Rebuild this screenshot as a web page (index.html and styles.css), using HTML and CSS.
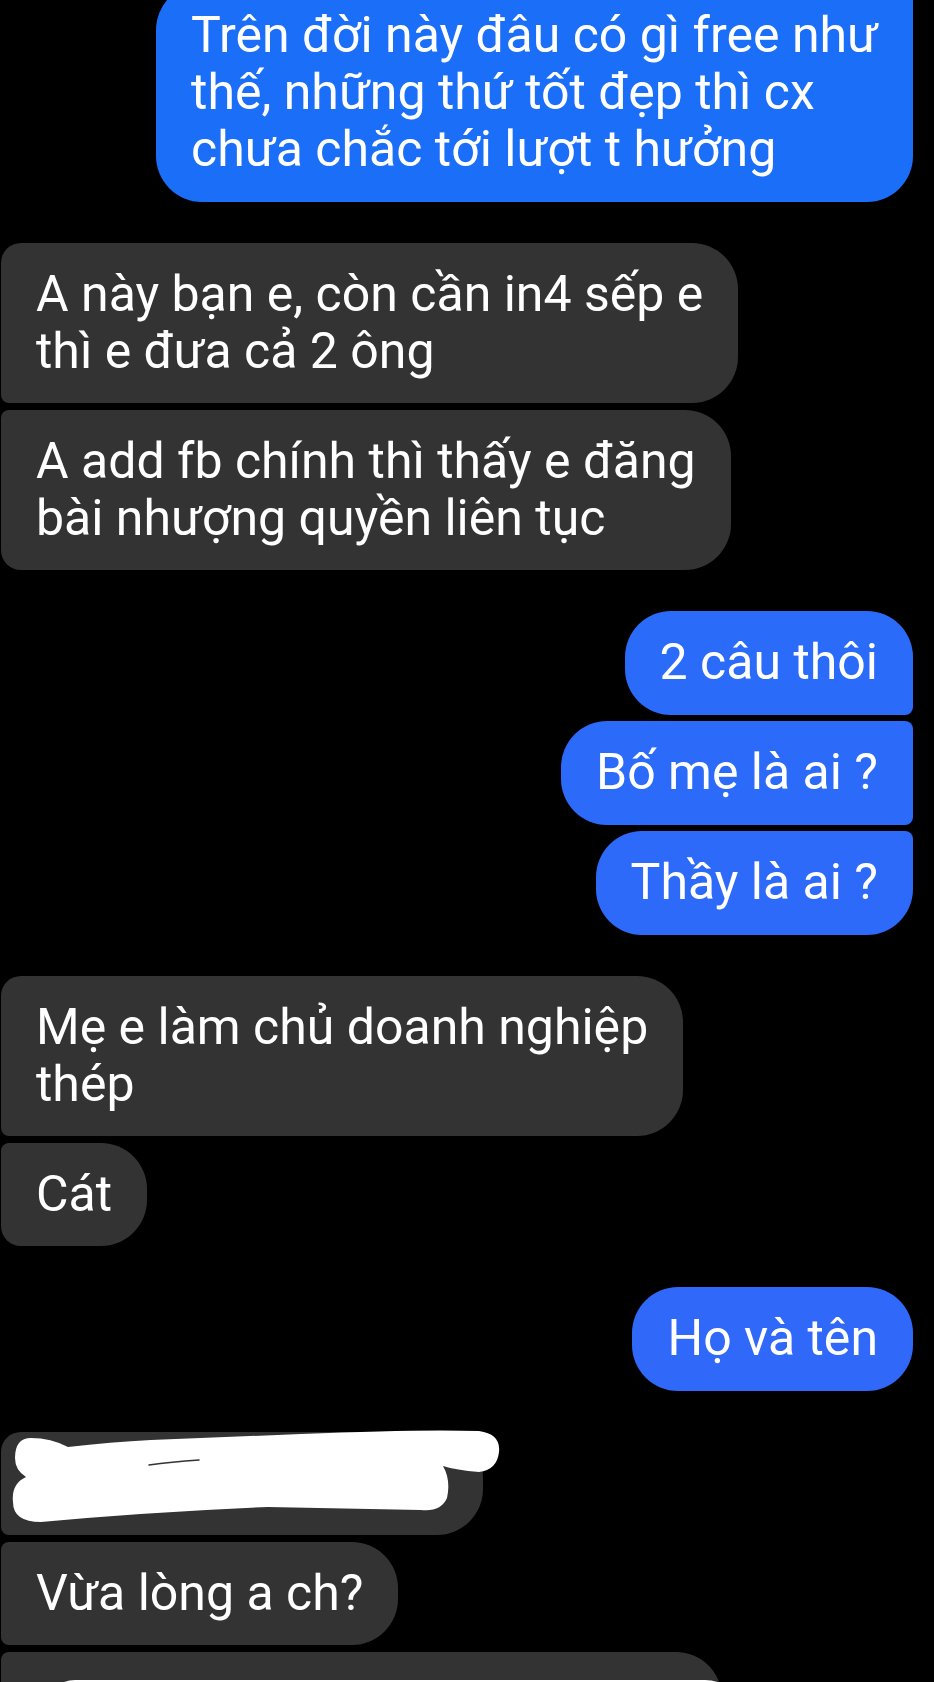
FILE: index.html
```html
<!DOCTYPE html>
<html lang="vi">
<head>
<meta charset="utf-8">
<title>Chat</title>
<link rel="stylesheet" href="styles.css">
</head>
<body>
<div class="chat">
  <div class="group sent">
    <div class="msg out out-last tone-1">Trên đời này đâu có gì free như<br>thế, những thứ tốt đẹp thì cx<br>chưa chắc tới lượt t hưởng</div>
  </div>

  <div class="group recv">
    <div class="msg in in-first">A này bạn e, còn cần in4 sếp e<br>thì e đưa cả 2 ông</div>
    <div class="msg in in-last">A add fb chính thì thấy e đăng<br>bài nhượng quyền liên tục</div>
  </div>

  <div class="group sent">
    <div class="msg out out-first tone-2">2 câu thôi</div>
    <div class="msg out out-mid tone-3">Bố mẹ là ai ?</div>
    <div class="msg out out-last tone-4">Thầy là ai ?</div>
  </div>

  <div class="group recv">
    <div class="msg in in-first">Mẹ e làm chủ doanh nghiệp<br>thép</div>
    <div class="msg in in-last">Cát</div>
  </div>

  <div class="group sent">
    <div class="msg out out-single tone-5">Họ và tên</div>
  </div>

  <div class="group recv">
    <div class="msg in in-first redacted-a">&nbsp;
      <svg class="scribble scribble-a" width="510" height="100" viewBox="0 -6 510 100" aria-hidden="true">
        <path d="M30 6 Q50 6 67 15 Q110 10 150 8 L300 2 Q420 -3 478 -1 Q500 2 498 20 Q496 38 478 40 Q455 38 442 34 Q450 48 446 66 Q440 80 420 78 L267 75 Q150 80 40 90 Q12 90 12 70 Q10 52 25 45 Q14 38 14 26 Q14 6 30 6 Z" fill="#ffffff"/>
        <path d="M148 33 Q170 30 198 28" stroke="#333333" stroke-width="1.5" fill="none" stroke-linecap="round"/>
      </svg>
    </div>
    <div class="msg in in-mid">Vừa lòng a ch?</div>
    <div class="msg in in-mid redacted-b">&nbsp;
      <span class="scribble-b"></span>
    </div>
  </div>
</div>
</body>
</html>
```

FILE: styles.css
```css
html, body {
  margin: 0;
  padding: 0;
  background: #000000;
}

body {
  width: 934px;
  height: 1682px;
  overflow: hidden;
  font-family: Roboto, "Noto Sans", "Liberation Sans", sans-serif;
}

.chat {
  display: flex;
  flex-direction: column;
  gap: 41px;
  margin-top: -16px;
}

.group {
  display: flex;
  flex-direction: column;
  gap: 6.5px;
}

.group.sent {
  align-items: flex-end;
  padding-right: 21px;
}

.group.recv {
  align-items: flex-start;
  padding-left: 1px;
}

.msg {
  position: relative;
  box-sizing: border-box;
  font-size: 50px;
  line-height: 57px;
  color: #ffffff;
  padding: 23.25px 35px;
  white-space: nowrap;
}

/* sent (blue) */
.out-first { border-radius: 46px 46px 8px 46px; }
.out-mid   { border-radius: 46px 8px 8px 46px; }
.out-last  { border-radius: 46px 8px 46px 46px; }
.out-single { border-radius: 46px; }

.tone-1 { background: #1b6ef8; }
.tone-2 { background: #2a6cf9; }
.tone-3 { background: #2c6bf9; }
.tone-4 { background: #2e6afa; }
.tone-5 { background: #3068fa; }

/* received (gray) */
.in {
  background: #333333;
}
.in-first { border-radius: 20px 46px 46px 8px; }
.in-mid   { border-radius: 8px 46px 46px 8px; }
.in-last  { border-radius: 8px 46px 46px 20px; }

.redacted-a {
  width: 482px;
}

.redacted-b {
  width: 721px;
  height: 120px;
}

.scribble {
  position: absolute;
  left: 0;
  top: -6px;
  overflow: visible;
}

.scribble-b {
  position: absolute;
  left: 44px;
  top: 28px;
  width: 700px;
  height: 60px;
  background: #ffffff;
  border-radius: 30px 40px 0 0;
}
```
